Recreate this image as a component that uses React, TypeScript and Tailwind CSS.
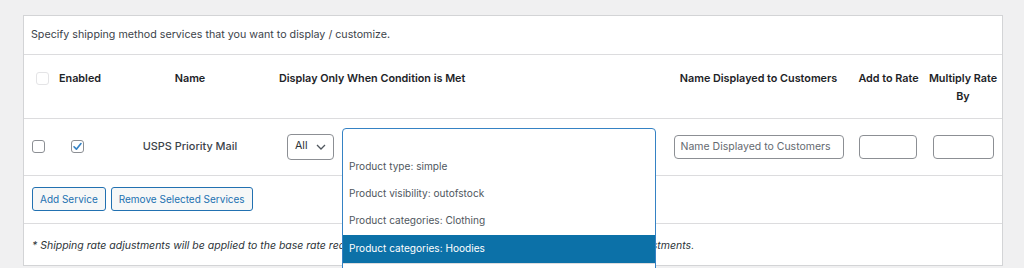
import React from "react";

const options = [
  "Product type: simple",
  "Product visibility: outofstock",
  "Product categories: Clothing",
  "Product categories: Hoodies",
];

const Checkbox = ({ checked = false, faded = false }: { checked?: boolean; faded?: boolean }) => (
  <span
    className={
      faded
        ? "inline-flex h-[13px] w-[13px] items-center justify-center rounded-[3px] border border-[#e4e4e6] bg-white"
        : "inline-flex h-[13px] w-[13px] items-center justify-center rounded-[3px] border border-[#8c8f94] bg-white"
    }
  >
    {checked && (
      <svg width="11" height="11" viewBox="0 0 12 12">
        <path d="M2.2 6.3 L4.8 8.9 L9.8 2.8" fill="none" stroke="#3582c4" strokeWidth="1.8" strokeLinecap="round" strokeLinejoin="round" />
      </svg>
    )}
  </span>
);

export default function App() {
  return (
    <div
      className="h-[268px] overflow-hidden bg-[#f0f0f1] pl-[23px] pt-[15px] text-[10.7px] text-[#3c434a]"
      style={{ fontFamily: "Inter, 'Noto Sans', sans-serif" }}
    >
      <div className="relative w-[980px] border border-[#d3d4d6] bg-white">
        <div className="flex h-[39px] items-center border-b border-[#dcdcde] px-[7px]">
          Specify shipping method services that you want to display / customize.
        </div>

        <table className="w-full table-fixed border-collapse">
          <colgroup>
            <col className="w-[31px]" />
            <col className="w-[50px]" />
            <col className="w-[170px]" />
            <col className="w-[389px]" />
            <col className="w-[189px]" />
            <col className="w-[71px]" />
            <col className="w-[78px]" />
          </colgroup>
          <thead>
            <tr className="h-[63px] border-b border-[#dcdcde] align-top text-[10.8px] leading-[18px] text-[#1d2327]">
              <th className="pt-[17px] pl-[12px] text-left">
                <span className="flex">
                  <Checkbox faded />
                </span>
              </th>
              <th className="pt-[15px] text-center font-semibold">Enabled</th>
              <th className="pt-[15px] text-center font-semibold">Name</th>
              <th className="pt-[15px] pl-[4px] text-left font-semibold">Display Only When Condition is Met</th>
              <th className="pt-[15px] text-center font-semibold">Name Displayed to Customers</th>
              <th className="pt-[15px] text-center font-semibold">Add to Rate</th>
              <th className="pt-[15px] px-[4px] text-center font-semibold">Multiply Rate By</th>
            </tr>
          </thead>
          <tbody>
            <tr className="h-[57px] border-b border-[#dcdcde]">
              <td className="pl-[8px]">
                <span className="flex">
                  <Checkbox />
                </span>
              </td>
              <td>
                <span className="flex justify-center pr-[6px]">
                  <Checkbox checked />
                </span>
              </td>
              <td className="text-center text-[10.9px] font-medium text-[#3c434a]">USPS Priority Mail</td>
              <td className="pl-[12px]">
                <div className="flex h-[26px] items-start">
                  <div className="flex h-[26px] w-[47px] items-center justify-between rounded-[4px] border border-[#8c8f94] px-[7px] text-[#2c3338]">
                    <span>All</span>
                    <svg width="10" height="6" viewBox="0 0 10 6">
                      <path d="M1 1 L5 5 L9 1" fill="none" stroke="#50575e" strokeWidth="1.3" />
                    </svg>
                  </div>
                  <div className="relative ml-[8px] h-[26px] w-[314px]">
                    <div className="absolute left-0 top-[-6px] w-[314px] rounded-t-[4px] border border-[#3582c4] bg-white text-[10.1px]">
                      <div className="h-[25px]" />
                      {options.map((o, i) => (
                        <div
                          key={o}
                          className={
                            i === 3
                              ? "flex h-[28px] items-center bg-[#0c71a8] px-[6px] text-white"
                              : "flex h-[27px] items-center px-[6px] text-[#50575e]"
                          }
                        >
                          {o}
                        </div>
                      ))}
                      <div className="h-[30px] border-t border-[#dcdcde]" />
                    </div>
                  </div>
                </div>
              </td>
              <td className="text-center">
                <div className="mx-auto flex h-[24px] w-[170px] items-center rounded-[4px] border border-[#8c8f94] px-[6px] text-[10.5px] text-[#646970]">
                  Name Displayed to Customers
                </div>
              </td>
              <td>
                <div className="ml-[6px] h-[24px] w-[58px] rounded-[4px] border border-[#8c8f94]" />
              </td>
              <td>
                <div className="ml-[9px] h-[24px] w-[61px] rounded-[4px] border border-[#8c8f94]" />
              </td>
            </tr>
            <tr className="h-[48px] border-b border-[#dcdcde]">
              <td colSpan={7} className="pl-[8px]">
                <div className="flex gap-[5px] text-[10px] text-[#2271b1]">
                  <span className="flex h-[24px] items-center rounded-[3px] border border-[#2271b1] bg-[#f6f7f7] px-[7px]">
                    Add Service
                  </span>
                  <span className="flex h-[24px] items-center rounded-[3px] border border-[#2271b1] bg-[#f6f7f7] px-[7px]">
                    Remove Selected Services
                  </span>
                </div>
              </td>
            </tr>
            <tr className="h-[42px]">
              <td colSpan={7} className="pl-[8px] pt-[14px] align-top text-[10.5px] leading-[16px] italic text-[#2c3338]">
                * Shipping rate adjustments will be applied to the base rate received from the carrier(s), before any other discounts and adjustments.
              </td>
            </tr>
          </tbody>
        </table>
      </div>
    </div>
  );
}
